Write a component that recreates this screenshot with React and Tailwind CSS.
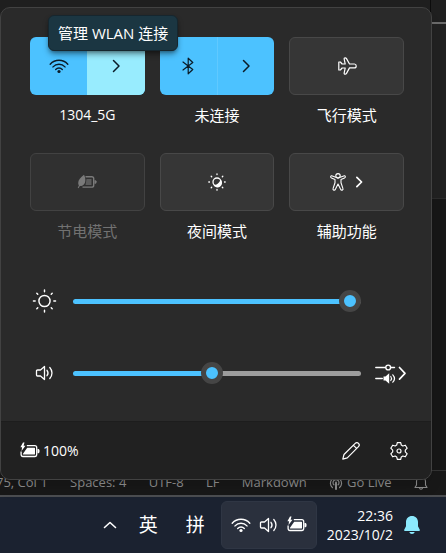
import { useState } from "react";

const font = "font-['Open_Sans','Noto_Sans_CJK_SC',sans-serif]";

function Wifi({ size = 20 }) {
  return (
    <svg width={size} height={size} viewBox="0 0 20 20" fill="none" stroke="currentColor" strokeWidth="1.4" strokeLinecap="round">
      <path d="M1.2 8.2C6 3 14 3 18.8 8.2M4 10.9c3.300-3.600 8.700-3.600 12 0M6.700 13.500c1.900-2 4.700-2 6.600 0" />
      <circle cx="10" cy="15.500" r="1.600" fill="currentColor" stroke="none" />
    </svg>
  );
}

function Chevron({ size = 14, width = 1.5 }) {
  return (
    <svg width={size} height={size} viewBox="0 0 14 14" fill="none" stroke="currentColor" strokeWidth={width} strokeLinecap="round" strokeLinejoin="round">
      <path d="M4.500 1.500 10 7l-5.500 5.500" />
    </svg>
  );
}

function Bluetooth() {
  return (
    <svg width="20" height="20" viewBox="0 0 20 20" fill="none" stroke="currentColor" strokeWidth="1.200" strokeLinejoin="round" strokeLinecap="round">
      <path d="m5 6 9.800 7.500L10.200 17.800V2.200l4.600 4.300L5 14" />
    </svg>
  );
}

function Plane() {
  return (
    <svg width="20" height="20" viewBox="0 0 20 20" fill="none" stroke="currentColor" strokeWidth="1.200" strokeLinejoin="round">
      <path d="M8.200 8 7.200 3.200C7 2.400 7.400 1.800 8.200 1.800c.6 0 1 .3 1.300.8L12.500 8h4.900c1.100 0 1.800.8 1.800 1.900s-.7 2-1.800 2h-4.900l-3 5.500c-.3.500-.7.800-1.300.800-.8 0-1.200-.6-1-1.400L8.200 12H5.100l-1.700 2H1.800V6h1.600l1.700 2z" />
    </svg>
  );
}

function LeafBattery() {
  return (
    <svg width="20" height="16" viewBox="0 0 20 16" fill="none" stroke="currentColor" strokeWidth="1.400">
      <path d="M8.500 2.700h6.300c1.200 0 1.900.7 1.900 1.900v6.600c0 1.200-.7 1.900-1.900 1.900H5.500" />
      <path d="M9.500 5h5v6h-6z" fill="currentColor" stroke="none" opacity=".6" />
      <path d="M17.500 6.200h1.200l.8 1v1.600l-.8 1h-1.200z" fill="currentColor" stroke="none" />
      <path d="M7 .8c1.800 3.400 2.200 8-1 10.500-.9.700-2 .9-3 .5l-1.500 2.400-.8-.5 1.200-2.300C-.2 7.900 2.600 4.300 7 .8z" fill="currentColor" stroke="none" />
    </svg>
  );
}

function NightLight() {
  return (
    <svg width="20" height="20" viewBox="0 0 20 20" fill="none" stroke="currentColor" strokeWidth="1.300" strokeLinecap="round">
      <circle cx="10" cy="10" r="4" />
      <path d="M13.400 7.500a4.500 4.500 0 1 1-7 5.200c3.300.6 6.200-1.700 7-5.200z" fill="currentColor" stroke="none" />
      <path d="M10 1.800v.7M10 17.500v.7M1.800 10h.7M17.500 10h.7M4.200 4.200l.5.500M15.300 15.300l.5.500M4.200 15.800l.5-.5M15.300 4.700l.5-.5" />
    </svg>
  );
}

function Accessibility() {
  return (
    <svg width="18" height="20" viewBox="0 0 18 20" fill="none" stroke="currentColor" strokeWidth="1.100" strokeLinejoin="round">
      <circle cx="9" cy="3.800" r="2.200" />
      <path d="M6.800 5.200 3.300 3.900c-.8-.3-1.400 0-1.600.6s.1 1.200.8 1.500L6 7.500v3.300l-1.900 5.600c-.3.800 0 1.500.7 1.700s1.300-.1 1.600-.8L9 12l2.600 5.300c.3.700.9 1 1.600.8s1-.9.700-1.700L12 10.800V7.500L15.500 6c.7-.3 1-.9.8-1.500s-.8-.9-1.600-.6l-3.500 1.300c-1.200 1-3.200 1-4.400 0z" />
    </svg>
  );
}

function Sun() {
  return (
    <svg width="25" height="26" viewBox="0 0 26 26" fill="none" stroke="currentColor" strokeWidth="1.500" strokeLinecap="round">
      <circle cx="13" cy="13" r="5.800" />
      <path d="M13 1.500v1.800M13 22.700v1.800M1.500 13h1.800M22.700 13h1.800M5 5l1 1M20 20l1 1M5 21l1-1M20 6l1-1" />
    </svg>
  );
}

function Speaker() {
  return (
    <svg width="20" height="20" viewBox="0 0 20 20" fill="none" stroke="currentColor" strokeWidth="1.300" strokeLinejoin="round" strokeLinecap="round">
      <path d="M9.500 3.500v13L5.500 13h-3c-.6 0-1-.4-1-1V8c0-.6.4-1 1-1h3z" />
      <path d="M12 7.300c1.200 1.600 1.200 3.800 0 5.400M14.800 4.500c2.900 3.200 2.900 7.800 0 11" />
    </svg>
  );
}

function Mixer() {
  return (
    <svg width="32" height="22" viewBox="0 0 32 22" fill="none" stroke="currentColor" strokeWidth="1.400" strokeLinecap="round" strokeLinejoin="round">
      <path d="M.8 5.500h9.500M16 5.500h3.500M.8 16.500h6.500" />
      <circle cx="13.200" cy="5.500" r="2.400" />
      <path d="M8.500 14.500h2l3.700-3.200v10.400l-3.700-3.200h-2z" fill="currentColor" stroke="none" />
      <path d="M15.800 14.500c.9 1.200.9 2.800 0 4M17.800 12.800c2 2.200 2 5.200 0 7.400" strokeWidth="1.200" />
      <path d="m24.500 5.500 5.500 5.800-5.500 5.800" strokeWidth="1.700" />
    </svg>
  );
}

function ChargingBattery() {
  return (
    <svg width="20" height="18" viewBox="0 0 20 18" fill="none" stroke="currentColor" strokeWidth="1.300">
      <path d="M6.800 3.700h8c1.200 0 1.900.7 1.900 1.900v7c0 1.200-.7 1.900-1.900 1.900H3c-1.200 0-1.900-.7-1.900-1.900V9.500" />
      <path d="M7.200 5.700h7.200c.4 0 .6.200.6.600v5.700c0 .4-.2.600-.6.600H3.400c-.5 0-.7-.5-.4-.9z" fill="currentColor" stroke="none" />
      <path d="M17.500 7h1.200l.8 1v2.200l-.8 1h-1.200z" fill="currentColor" stroke="none" />
      <path d="M3 .5.400 5.200h1.700L1.500 9l4-5.200H3.600L4.500.5z" fill="currentColor" stroke="none" />
    </svg>
  );
}

function Pencil() {
  return (
    <svg width="20" height="20" viewBox="0 0 20 20" fill="none" stroke="currentColor" strokeWidth="1.200" strokeLinejoin="round">
      <path d="M1.800 18.200 3 13.500 14.200 2.300c.9-.9 2.400-.9 3.300 0 .9.900.9 2.400 0 3.300L6.300 16.900zM12.300 4.200l3.500 3.500" />
    </svg>
  );
}

function Gear() {
  return (
    <svg width="20" height="20" viewBox="0 0 20 20" fill="none" stroke="currentColor" strokeWidth="1.200" strokeLinejoin="round">
      <circle cx="10" cy="10" r="2" />
      <path d="M8.300 1.600h3.400l.6 2.500 1.500.9 2.500-.8 1.900 3-1.900 1.900v1.800l1.900 1.900-1.900 3-2.500-.8-1.500.9-.6 2.500H8.300l-.6-2.500-1.500-.9-2.500.8-1.900-3 1.900-1.900V9.100L1.800 7.200l1.900-3 2.500.8 1.500-.9z" />
    </svg>
  );
}

function Broadcast() {
  return (
    <svg width="14" height="14" viewBox="0 0 14 14" fill="none" stroke="currentColor" strokeWidth="1.200" strokeLinecap="round">
      <path d="M3.400 11.500a5.600 5.600 0 1 1 7.200 0M4.900 8.800a3 3 0 1 1 4.200 0" />
      <path d="M7 6.500v6.500" strokeWidth="2" />
    </svg>
  );
}

function Bell() {
  return (
    <svg width="14" height="15" viewBox="0 0 14 15" fill="none" stroke="currentColor" strokeWidth="1.100" strokeLinejoin="round">
      <path d="M2.500 9V5.500a4.500 4.500 0 0 1 9 0V9l1.500 2.500H1zM5.500 12c.3 1.600 2.700 1.600 3 0" />
    </svg>
  );
}

function FilledBell() {
  return (
    <svg width="18" height="20" viewBox="0 0 18 20" fill="currentColor">
      <path d="M9 1C5.500 1 3 3.600 3 7v4.300L1.200 14.700c-.3.600 0 1.200.7 1.200h14.200c.7 0 1-.6.700-1.200L15 11.300V7c0-3.400-2.500-6-6-6zM6.300 17c.4 1.300 1.400 2 2.700 2s2.300-.7 2.700-2z" />
    </svg>
  );
}

const tile = "flex h-[58px] w-full items-center justify-center rounded-md border";
const plain = "border-[#484848] bg-[#363636] text-white";

function Tile({ label, icon, muted, more }) {
  return (
    <div className="flex flex-col items-center gap-2.5">
      <button
        aria-label={label}
        disabled={muted}
        className={`${tile} gap-1.5 ${muted ? "border-[#424242] bg-[#303030] text-[#7a7a7a]" : plain}`}
      >
        {icon}
        {more && <Chevron size={12} width={2} />}
      </button>
      <span className={`text-[15px] leading-5 ${muted ? "text-[#727272]" : "text-white"}`}>{label}</span>
    </div>
  );
}

function SplitTile({ label, icon, moreLabel, hovered, latin }) {
  return (
    <div className="flex flex-col items-center gap-2.5">
      <div className="flex h-[58px] w-full overflow-hidden rounded-md bg-[#4cc2ff] text-[#0b1c28]">
        <button aria-label={label} className="flex flex-1 items-center justify-center">
          {icon}
        </button>
        <button
          aria-label={moreLabel}
          className={`flex flex-1 items-center justify-center ${hovered ? "bg-[#98ecfe]" : "border-l border-[#60c9ff]"}`}
        >
          <Chevron />
        </button>
      </div>
      <span className={`leading-5 text-white ${latin ? "text-[14px]" : "text-[15px]"}`}>{label}</span>
    </div>
  );
}

function Slider({ label, initial }) {
  const [value, setValue] = useState(initial);
  const stop = `calc(11px + (100% - 22px) * ${value / 100})`;
  return (
    <input
      type="range"
      aria-label={label}
      value={value}
      onChange={(e) => setValue(Number(e.target.value))}
      style={{ background: `linear-gradient(to right, #4cc2ff ${stop}, #9d9d9d ${stop})` }}
      className="h-[5px] min-w-0 flex-1 appearance-none rounded-full [&::-webkit-slider-thumb]:size-[22px] [&::-webkit-slider-thumb]:appearance-none [&::-webkit-slider-thumb]:rounded-full [&::-webkit-slider-thumb]:border-5 [&::-webkit-slider-thumb]:border-[#454545] [&::-webkit-slider-thumb]:bg-[#4cc2ff]"
    />
  );
}

function QuickSettings() {
  return (
    <section className="absolute top-[7px] right-3.5 left-0 overflow-hidden rounded-[10px] border border-[#424242] bg-[#2a2a2a] shadow-lg">
      <div className="grid grid-cols-3 gap-x-[15px] gap-y-7 pt-[29px] pr-[27px] pl-[29px]">
        <SplitTile label="1304_5G" moreLabel="管理 WLAN 连接" icon={<Wifi />} hovered latin />
        <SplitTile label="未连接" moreLabel="管理蓝牙设备" icon={<Bluetooth />} />
        <Tile label="飞行模式" icon={<Plane />} />
        <Tile label="节电模式" icon={<LeafBattery />} muted />
        <Tile label="夜间模式" icon={<NightLight />} />
        <Tile label="辅助功能" icon={<Accessibility />} more />
      </div>
      <div className="flex flex-col gap-10 pt-11 pr-6 pb-8 pl-[31px] text-white">
        <div className="flex h-8 items-center">
          <span className="mr-4 w-[25px]"><Sun /></span>
          <Slider label="亮度" initial={100} />
          <span className="ml-3.5 w-8" />
        </div>
        <div className="flex h-8 items-center">
          <button aria-label="静音" className="mr-4 flex w-[25px] justify-center"><Speaker /></button>
          <Slider label="音量" initial={48} />
          <button aria-label="选择声音输出" className="ml-3.5 w-8"><Mixer /></button>
        </div>
      </div>
      <footer className="flex h-[58px] items-center border-t border-[#1d1d1d] bg-[#212121] pr-[22px] pl-[19px] text-white">
        <button className="flex items-center gap-[3px] text-[14px]">
          <ChargingBattery />
          100%
        </button>
        <button aria-label="编辑快速设置" className="ml-auto"><Pencil /></button>
        <button aria-label="所有设置" className="ml-7"><Gear /></button>
      </footer>
    </section>
  );
}

export default function App() {
  return (
    <div className={`relative flex min-h-screen flex-col overflow-hidden bg-[#1a1a1a] ${font}`}>
      <div className="flex flex-1 flex-col">
        <div className="flex h-[22px] justify-end bg-[#1f1f1f]">
          <div className="w-4 border-l border-[#0c0c0c]" />
        </div>
        <div className="h-[176px] border-t-2 border-[#6a6a6a] bg-[#212121]" />
        <div className="flex-1 border-t border-[#2c2c2c] bg-[#171717]" />
        <div className="flex h-[25px] items-center justify-between overflow-hidden border-t border-[#333333] bg-[#181818] pr-[18px] text-[13px] whitespace-nowrap text-[#8d8d8d]">
          <span className="-ml-1">75, Col 1</span>
          <span>Spaces: 4</span>
          <span>UTF-8</span>
          <span>LF</span>
          <span>Markdown</span>
          <span className="flex items-center gap-1"><Broadcast />Go Live</span>
          <Bell />
        </div>
      </div>
      <QuickSettings />
      <div role="tooltip" className="absolute top-[15px] left-12 rounded-md border border-[#16262e] bg-[#1b3642] px-[9px] py-1.5 text-[15px] leading-[22px] text-white shadow-md shadow-black/40">
        管理 WLAN 连接
      </div>
      <nav className="flex h-[58px] items-center border-t-2 border-[#4b4d50] bg-[#1b2230] pr-[25px] text-white">
        <button aria-label="显示隐藏的图标" className="ml-auto">
          <svg width="14" height="10" viewBox="0 0 14 10" fill="none" stroke="currentColor" strokeWidth="1.600" strokeLinecap="round" strokeLinejoin="round">
            <path d="m1.500 7.500 5.500-5 5.500 5" />
          </svg>
        </button>
        <button className="ml-[22px] text-[19px]">英</button>
        <button className="ml-7 text-[19px]">拼</button>
        <button aria-label="网络、音量、电池" className="ml-4 flex h-12 w-24 items-center justify-center gap-2 rounded-md border border-[#2f3644] bg-[#2a303d]">
          <Wifi />
          <Speaker />
          <ChargingBattery />
        </button>
        <button className="ml-2.5 text-right text-[14px] leading-[19px]">
          <span className="block">22:36</span>
          <span className="block">2023/10/2</span>
        </button>
        <button aria-label="通知" className="ml-2.5 text-[#8be9fd]"><FilledBell /></button>
      </nav>
    </div>
  );
}
